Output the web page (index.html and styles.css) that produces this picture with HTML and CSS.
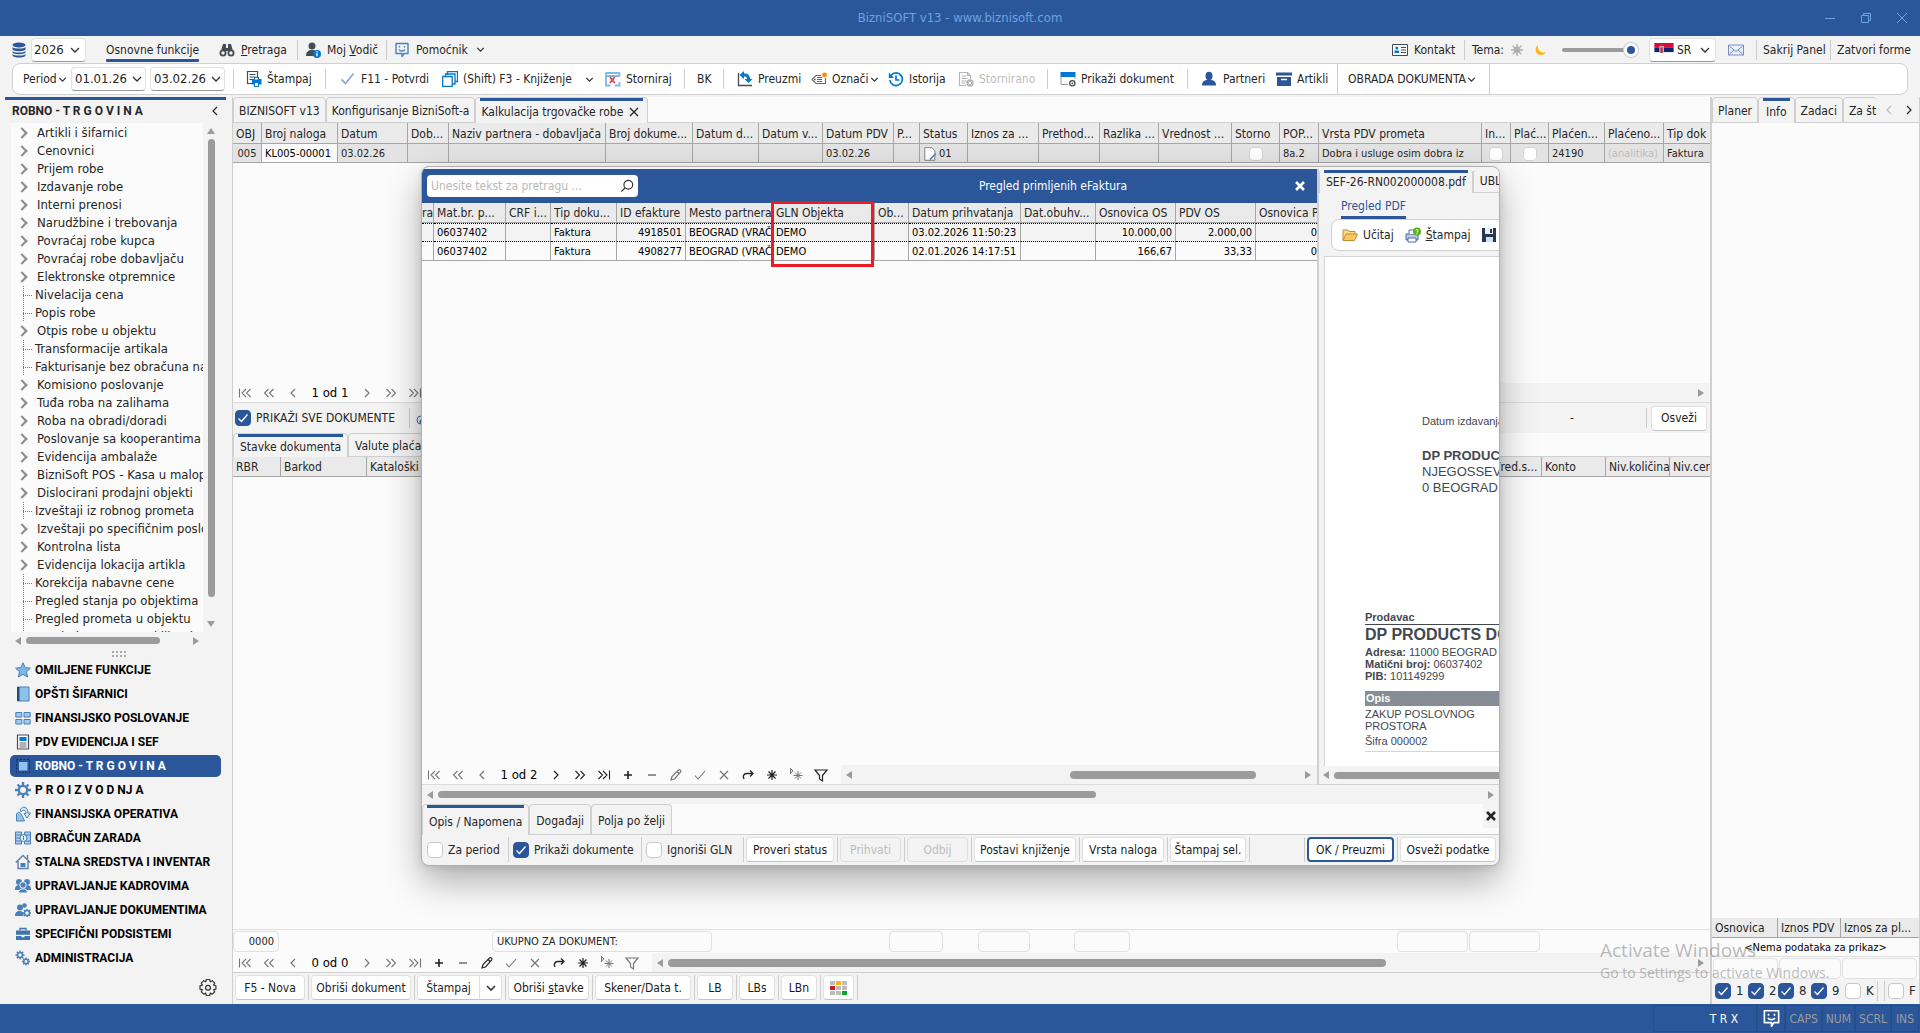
FILE: index.html
```html
<!DOCTYPE html>
<html lang="sr">
<head>
<meta charset="utf-8">
<title>BizniSOFT v13</title>
<link rel="stylesheet" href="styles.css">
</head>
<body>
<svg class="defs" aria-hidden="true">
  <symbol id="i-db" viewBox="0 0 16 16"><g fill="#2b579a"><ellipse cx="8" cy="3" rx="6.500" ry="2.500"/><path d="M1.500 5c1 2 12 2 13 0v2.500c-1 2.300-12 2.300-13 0zM1.500 9c1 2 12 2 13 0v1.500c-1 2.300-12 2.300-13 0zM1.500 12c1 2 12 2 13 0v1.500c-1 2.700-12 2.700-13 0z"/></g></symbol>
  <symbol id="i-chev" viewBox="0 0 16 16"><path d="M4 6l4 4 4-4" fill="none" stroke="#333" stroke-width="1.600"/></symbol>
  <symbol id="i-binoc" viewBox="0 0 16 16"><g fill="#444c54"><path d="M4 2h3v4h2V2h3l2 7H2z"/><circle cx="4" cy="11" r="3.500"/><circle cx="12" cy="11" r="3.500"/></g><circle cx="4" cy="11" r="1.700" fill="#f3f3f3"/><circle cx="12" cy="11" r="1.700" fill="#f3f3f3"/></symbol>
  <symbol id="i-userinfo" viewBox="0 0 16 16"><circle cx="7" cy="4" r="3.500" fill="#444c54"/><path d="M1 14c0-4 2-5 4-6h4c2 1 3 2 3 6z" fill="#444c54"/><circle cx="12" cy="12" r="4" fill="#0078d4"/><path d="M12 9.200v1.300M12 11.300v3" stroke="#fff" stroke-width="1.400"/></symbol>
  <symbol id="i-smile" viewBox="0 0 16 16"><path d="M2 1.500h12v10h-4l-2 3v-3H2z" fill="none" stroke="currentColor" stroke-width="1.400" stroke-linejoin="round"/><path d="M5.500 4v1.600M10.500 4v1.600M5 7.500c1 2 5 2 6 0" fill="none" stroke="currentColor" stroke-width="1.400"/></symbol>
  <symbol id="i-card" viewBox="0 0 16 16"><path d="M.5 2.500h15v11H.5z" fill="#fff" stroke="#444c54"/><circle cx="4.800" cy="6" r="1.500" fill="#0078d4"/><path d="M2.500 11V8.500h4.500V11z" fill="#0078d4"/><path d="M9 5.500h5M9 8h5M9 10.500h5" stroke="#444c54"/></symbol>
  <symbol id="i-sun" viewBox="0 0 16 16"><circle cx="8" cy="8" r="3.300" fill="#b0b0b0"/><path d="M8 2v3M8 11v3M2 8h3M11 8h3M3.700 3.700l2 2M10.300 10.300l2 2M12.300 3.700l-2 2M5.700 10.300l-2 2" stroke="#b0b0b0" stroke-width="1.500"/></symbol>
  <symbol id="i-moon" viewBox="0 0 16 16"><path d="M5 3a5.500 5.500 0 1 0 8 7c-5 2-9-2-8-7z" fill="#fdb913"/></symbol>
  <symbol id="i-flag" viewBox="0 0 22 16"><path fill="#dc0a3c" d="M0 0h22v5.400H0z"/><path fill="#0c2577" d="M0 5.300h22v5.400H0z"/><path fill="#fff" d="M0 10.600h22V16H0z"/><path fill="#d9a0a8" d="M5.500 3h5.500v7c0 2-5.500 2-5.500 0z"/><path fill="#c0283c" d="M7 5h2.500v6H7zM6 1h4.500v2H6z"/></symbol>
  <symbol id="i-mail" viewBox="0 0 16 16"><path d="M.5 3h15v10H.5z" fill="#eaf0fa" stroke="#7b8fc4"/><path d="M.5 3.500L8 9.500l7.500-6M.5 13l5.500-5M15.500 13L10 8" fill="none" stroke="#7b8fc4"/></symbol>
  <symbol id="i-print" viewBox="0 0 16 16"><path d="M7 12.500H1.500v-12h10V6M3.500 3.500h6M3.500 6h6M3.500 8.500H6" fill="none" stroke="#444c54" stroke-width="1.200"/><path d="M8 8V6h5v2h2.500v5.500H13V16H8v-2.500H6V8z" fill="#0078d4"/><path d="M9 7h3v1.500H9zM9 12h3v3H9z" fill="#fff"/></symbol>
  <symbol id="i-check" viewBox="0 0 16 16"><path d="M1.500 8.500l4 4 8-10" fill="none" stroke="#8fa8d4" stroke-width="1.800"/></symbol>
  <symbol id="i-copy" viewBox="0 0 16 16"><path d="M5.500 4V.5h10v10H13M3.500 6V3h9.500v10h-2.500M.7 5.500h9.500v10H.7z" fill="none" stroke="#0078d4" stroke-width="1.300"/></symbol>
  <symbol id="i-cancel" viewBox="0 0 16 16"><path d="M1 1.500v13h4.500M14.500 5V1.500M1 2h13.500M14.500 11v3.500H10M1 5h13.500" fill="none" stroke="#7db8ea" stroke-width="1.800"/><path d="M4.800 6l5 6M9.800 6l-5 6" stroke="#e23b4a" stroke-width="1.800"/></symbol>
  <symbol id="i-load" viewBox="0 0 16 16"><path d="M1.500 2v12.500H15" fill="none" stroke="#444c54" stroke-width="1.300"/><path d="M2.500 4L7 0v2.500c4 0 6 2 6 5.500h2.500L11.500 12 7.500 8H10c0-2-1-2.500-3-2.500V8z" fill="#0078d4"/></symbol>
  <symbol id="i-tag" viewBox="0 0 16 16"><path d="M14.500 7v5.500H5L1 8.500l4-4h5M6 6.500h5M6 8.500h5M6 10.500h5" fill="none" stroke="#666" stroke-width="1.100"/><circle cx="3.800" cy="8.500" r=".9" fill="#666"/><circle cx="13.500" cy="4" r="2.400" fill="#ff8c00"/></symbol>
  <symbol id="i-history" viewBox="0 0 16 16"><path d="M3 4.500A6.300 6.300 0 1 1 1.800 9M8 4.500V9h3.500" fill="none" stroke="#0078d4" stroke-width="1.700"/><path d="M.8 1.500V7H6z" fill="#0078d4"/></symbol>
  <symbol id="i-docx" viewBox="0 0 16 16"><path d="M8 14.500H1.500v-13h8l3 3V8M3.500 5h5M3.500 7.500h6M3.500 10h5M3.500 12h4M9.500 1.500v3h3" fill="none" stroke="#b5b5b5" stroke-width="1.100"/><circle cx="12" cy="12" r="3.700" fill="#b5b5b5"/><path d="M10.500 10.500l3 3M13.500 10.500l-3 3" stroke="#fff"/></symbol>
  <symbol id="i-window" viewBox="0 0 16 16"><path d="M.5 1h15v5H.5z" fill="#0078d4"/><path d="M1 6v7.500h7M15 6v2" fill="none" stroke="#999"/><circle cx="12.300" cy="12.300" r="2.600" fill="none" stroke="#444c54" stroke-width="1.300"/><circle cx="12.300" cy="12.300" r=".9" fill="#444c54"/></symbol>
  <symbol id="i-user" viewBox="0 0 16 16"><ellipse cx="7" cy="5" rx="3.500" ry="4.300" fill="#2b579a"/><path d="M0 14.500c0-4 2-5 4.500-5.500h5c2.500.5 4.500 1.500 4.500 5.500z" fill="#2b579a"/></symbol>
  <symbol id="i-box" viewBox="0 0 16 16"><path d="M0 1.500h16v3H0zM1 6h14v9H1z" fill="#2b579a"/><path d="M5 8.500h6" stroke="#fff" stroke-width="1.500"/></symbol>
  <symbol id="i-x" viewBox="0 0 16 16"><path d="M4 4l8 8M12 4l-8 8" stroke="currentColor" stroke-width="1.300"/></symbol>
  <symbol id="i-xbold" viewBox="0 0 16 16"><path d="M4 4l8 8M12 4l-8 8" stroke="currentColor" stroke-width="2.600"/></symbol>
  <symbol id="i-left" viewBox="0 0 16 16"><path d="M10 4L6 8l4 4" fill="none" stroke="currentColor" stroke-width="1.200"/></symbol>
  <symbol id="i-right" viewBox="0 0 16 16"><path d="M6 4l4 4-4 4" fill="none" stroke="currentColor" stroke-width="1.200"/></symbol>
  <symbol id="i-left2" viewBox="0 0 16 16"><path d="M7.500 4l-4 4 4 4M12.500 4l-4 4 4 4" fill="none" stroke="currentColor" stroke-width="1.100"/></symbol>
  <symbol id="i-right2" viewBox="0 0 16 16"><path d="M8.500 4l4 4-4 4M3.500 4l4 4-4 4" fill="none" stroke="currentColor" stroke-width="1.100"/></symbol>
  <symbol id="i-first" viewBox="0 0 16 16"><path d="M2.500 3.500v9M9 4L5 8l4 4M13.500 4l-4 4 4 4" fill="none" stroke="currentColor" stroke-width="1.100"/></symbol>
  <symbol id="i-last" viewBox="0 0 16 16"><path d="M13.500 3.500v9M7 4l4 4-4 4M2.500 4l4 4-4 4" fill="none" stroke="currentColor" stroke-width="1.100"/></symbol>
  <symbol id="i-plus" viewBox="0 0 16 16"><path d="M4 8h8M8 4v8" stroke="currentColor" stroke-width="1.600"/></symbol>
  <symbol id="i-minus" viewBox="0 0 16 16"><path d="M4 8h8" stroke="currentColor" stroke-width="1.600"/></symbol>
  <symbol id="i-pen" viewBox="0 0 16 16"><path d="M3 13l1-3.500L10.500 3c1.500-1 3 .5 2.200 2L6.500 12zM9 4.500l2.500 2.500" fill="none" stroke="currentColor" stroke-width="1.200"/></symbol>
  <symbol id="i-tick" viewBox="0 0 16 16"><path d="M3 8.500l3 3.500 7-8" fill="none" stroke="currentColor" stroke-width="1.100"/></symbol>
  <symbol id="i-redo" viewBox="0 0 16 16"><path d="M4 12C2 8 5 6.500 7 6.500h5.500M10 3.500l3 3-3 3" fill="none" stroke="currentColor" stroke-width="1.300"/></symbol>
  <symbol id="i-star" viewBox="0 0 16 16"><path d="M8 3v10M3 8h10M4.500 4.500l7 7M11.500 4.500l-7 7" stroke="currentColor" stroke-width="1.200"/></symbol>
  <symbol id="i-starp" viewBox="0 0 16 16"><path d="M10 4v9M5.500 8.500h9M7 5.500l6 6M13 5.500l-6 6M2.500 1v6M2.500 1.500L5 4 2.500 6" fill="none" stroke="currentColor"/></symbol>
  <symbol id="i-filter" viewBox="0 0 16 16"><path d="M2 3h12L9.500 8.500V14L6.500 12V8.500z" fill="none" stroke="currentColor" stroke-width="1.200"/></symbol>
  <symbol id="i-search" viewBox="0 0 16 16"><circle cx="9.500" cy="6.500" r="5" fill="none" stroke="#333" stroke-width="1.300"/><path d="M6 10l-4.500 4.500" stroke="#333" stroke-width="1.300"/></symbol>
  <symbol id="i-folder" viewBox="0 0 16 16"><path d="M1 13V3h5l1 1.500h6V7" fill="#f7dc94" stroke="#c88a2e"/><path d="M1 13.500L4 7h11.500l-3 6.500z" fill="#fbc766" stroke="#c88a2e"/></symbol>
  <symbol id="i-printq" viewBox="0 0 16 16"><path d="M1 7h12v6H1z" fill="#b9c9e6" stroke="#4d6c9f"/><path d="M4 7V3h6v4M3 11h8v4H3z" fill="#fff" stroke="#4d6c9f"/><circle cx="12" cy="4.500" r="4" fill="#5fae1c"/><path d="M10.800 3.500c.5-1.500 3-1 2.200.5L12 5v.6M12 6.300v1" fill="none" stroke="#fff"/></symbol>
  <symbol id="i-disk" viewBox="0 0 16 16"><path d="M1 1h14v14H1z" fill="#26384f"/><path d="M4 1h8v6H4z" fill="#e8f0f8"/><path d="M5 10h7v5H5z" fill="#cfe0f2"/><path d="M9 2h2v4H9z" fill="#26384f"/></symbol>
  <symbol id="i-doc" viewBox="0 0 16 16"><path d="M2 .7h8l3.500 3.500v11H2z" fill="#fff" stroke="#777"/><path d="M15.500 8l-6 6-2 1.500.5-2.500 6-6z" fill="#4a80bd"/></symbol>
  <symbol id="i-clip" viewBox="0 0 16 16"><path d="M13 3L6 10a2 2 0 0 0 3 3l5-5" fill="none" stroke="#3f6db3" stroke-width="1.500"/><circle cx="6" cy="10" r="4" fill="none" stroke="#3f6db3"/></symbol>
  <symbol id="i-colors" viewBox="0 0 18 16"><path fill="#bdbdbd" d="M0 1h5v4H0zM12 1h5v4h-5zM6 6h5v4H6zM12 6h5v4h-5zM0 11h5v4H0zM6 11h5v4H6z"/><path fill="#f8b617" d="M6 1h5v4H6z"/><path fill="#cf1c1c" d="M0 6h5v4H0z"/><path fill="#10a52a" d="M12 11h5v4h-5z"/></symbol>
  <symbol id="i-gear" viewBox="0 0 20 20"><path d="M8.300 1.500h3.400l.6 2.300 2-1.100 2.400 2.400-1.100 2 2.300.7v3.400l-2.300.6 1.100 2-2.400 2.400-2-1.100-.6 2.400H8.300l-.6-2.400-2 1.100-2.400-2.400 1.100-2-2.400-.6V7.800l2.400-.7-1.100-2 2.400-2.400 2 1.100z" fill="none" stroke="#333" stroke-width="1.200" stroke-linejoin="round"/><circle cx="10" cy="9.700" r="2.400" fill="none" stroke="#333" stroke-width="1.200"/></symbol>
  <symbol id="n-star" viewBox="0 0 16 16"><path d="M8 .8l2.200 4.800 5.200.6-3.900 3.500 1.100 5.300L8 12.300 3.400 15l1.100-5.300L.6 6.200l5.200-.6z" fill="#7db7e4" stroke="#4a7fb8"/></symbol>
  <symbol id="n-book" viewBox="0 0 16 16"><path d="M2.500 1h11.500v14H2.500z" fill="#8cc3ec" stroke="#4a7fb8"/><path d="M2 1h2.500v14H2z" fill="#2c4a70"/></symbol>
  <symbol id="n-cells" viewBox="0 0 16 16"><path d="M.8 2.500h6v4.500h-6zM9 2.500h6.200v4.500H9zM.8 9.500h6V14h-6zM9 9.500h6.200V14H9z" fill="#9ccaf0" stroke="#4a7fb8"/></symbol>
  <symbol id="n-calc" viewBox="0 0 16 16"><path d="M2.500 1h11v14h-11z" fill="#fff" stroke="#444c54" stroke-width="1.200"/><path d="M4.500 3h7v4h-7z" fill="#0078d4"/><path d="M4.500 9h7M4.500 11h7M4.500 13h7" stroke="#666"/></symbol>
  <symbol id="n-square" viewBox="0 0 16 16"><path d="M1.500 1.500h13v13h-13z" fill="none" stroke="#16325e" stroke-dasharray="2 1.500"/><path d="M4 4h8.500v8.500H4z" fill="#8fc1f3"/></symbol>
  <symbol id="n-gear" viewBox="0 0 16 16"><path d="M8 0v16M0 8h16M2.500 2.500l11 11M13.500 2.500l-11 11" stroke="#4a80bd" stroke-width="2.400"/><circle cx="8" cy="8" r="5.300" fill="#4a80bd"/><circle cx="8" cy="8" r="3" fill="#f3f3f3"/></symbol>
  <symbol id="n-oper" viewBox="0 0 16 16"><path d="M1.500 15V8c3-4 5 0 8 7z" fill="#8cc3ec" stroke="#4a7fb8"/><path d="M5 4c3-5 8-3 8 3h2.500L12 12 9 7.500h2C11 4 8 3 6 6z" fill="#cfe5f7" stroke="#4a7fb8"/></symbol>
  <symbol id="n-pay" viewBox="0 0 16 16"><path d="M.5 2h6v12h-6zM9.500 2h6v12h-6z" fill="#a9cdea" stroke="#4a7fb8"/><path d="M.5 5h6M.5 8h6M.5 11h6M9.500 5h6M9.500 11h6" stroke="#4a7fb8"/><circle cx="8.500" cy="8" r="3.500" fill="#e6f1fa" stroke="#4a7fb8"/><path d="M8.500 6v4" stroke="#4a7fb8"/></symbol>
  <symbol id="n-home" viewBox="0 0 16 16"><path d="M.8 8.500L8 1.500l7.200 7M3 7v7.500h10V7M12.500 1v5" fill="none" stroke="#5d7fa8" stroke-width="1.400"/><path d="M5.500 9h5v4h-5z" fill="#4a80bd"/></symbol>
  <symbol id="n-people" viewBox="0 0 16 16"><g fill="#4a80bd"><circle cx="4" cy="4" r="3"/><circle cx="12" cy="4" r="3"/><path d="M0 11c0-3 2-4 4-4h8c2 0 4 1 4 4v1H0z"/></g><circle cx="8" cy="7" r="3.200" fill="#4a80bd" stroke="#f3f3f3"/><path d="M3.500 15c0-3 2-4.200 4.500-4.200s4.500 1.200 4.500 4.200z" fill="#4a80bd" stroke="#f3f3f3"/></symbol>
  <symbol id="n-peoplegear" viewBox="0 0 16 16"><g fill="#4a80bd"><circle cx="5" cy="5.500" r="3"/><circle cx="9.500" cy="3.500" r="2.300"/><path d="M0 14c0-4 2-5 5-5 2 0 3 1 3.500 2v3z"/></g><path d="M12 7v8M8 11h8M9 8l6 6M15 8l-6 6" stroke="#4a80bd" stroke-width="1.400"/><circle cx="12" cy="11" r="2.500" fill="#f3f3f3" stroke="#4a80bd" stroke-width="1.300"/></symbol>
  <symbol id="n-case" viewBox="0 0 16 16"><path d="M5 4.500V2.500h6v2" fill="none" stroke="#3f74ad" stroke-width="1.300"/><path d="M1 4.500h14v4.300H1zM1 10h5.500v1.200h3V10H15v4H1z" fill="#3f74ad"/></symbol>
  <symbol id="n-gears" viewBox="0 0 16 16"><g stroke="#4a80bd" stroke-width="1.500"><path d="M5 .5v9M.5 5h9M1.800 1.800l6.400 6.400M8.200 1.800L1.800 8.200M11 7.500v8M7 11.500h8M8.200 8.700l5.600 5.600M13.800 8.700l-5.600 5.600"/></g><circle cx="5" cy="5" r="2.500" fill="#f3f3f3" stroke="#4a80bd" stroke-width="1.500"/><circle cx="11" cy="11.500" r="2.200" fill="#f3f3f3" stroke="#4a80bd" stroke-width="1.500"/></symbol>
</svg>

<div class="app">
  <header class="titlebar">
    <h1 class="app-title">BizniSOFT v13 - www.biznisoft.com</h1>
    <div class="win-buttons">
      <button type="button" aria-label="Minimize"><svg viewBox="0 0 12 12"><path d="M1 6.500h10" stroke="currentColor"/></svg></button>
      <button type="button" aria-label="Restore"><svg viewBox="0 0 12 12"><path d="M1.500 3.500h7v7h-7zM3.500 3.500v-2h7v7h-2" fill="none" stroke="currentColor"/></svg></button>
      <button type="button" aria-label="Close"><svg viewBox="0 0 12 12"><path d="M1 1l10 10M11 1L1 11" stroke="currentColor"/></svg></button>
    </div>
  </header>

  <nav class="menubar">
    <svg class="ic"><use href="#i-db"/></svg>
    <select class="combo year" aria-label="Godina"><option>2026</option></select>
    <a class="menu-item active" href="#">Osnovne funkcije</a>
    <a class="menu-item" href="#"><svg class="ic"><use href="#i-binoc"/></svg><span><u>P</u>retraga</span></a>
    <span class="sep"></span>
    <a class="menu-item" href="#"><svg class="ic"><use href="#i-userinfo"/></svg><span>Moj <u>V</u>odič</span></a>
    <span class="sep"></span>
    <a class="menu-item" href="#"><svg class="ic blue"><use href="#i-smile"/></svg><span>Pomoćnik</span><svg class="mini"><use href="#i-chev"/></svg></a>
    <span></span>
    <a class="menu-item" href="#"><svg class="ic"><use href="#i-card"/></svg><span>Kontakt</span></a>
    <span class="sep"></span>
    <label for="theme">Tema:</label>
    <svg class="ic sun"><use href="#i-sun"/></svg>
    <svg class="ic"><use href="#i-moon"/></svg>
    <input class="slider" id="theme" type="range" min="0" max="10" value="10">
    <span class="lang"><svg class="flag"><use href="#i-flag"/></svg><select class="combo" aria-label="Jezik"><option>SR</option></select></span>
    <svg class="ic"><use href="#i-mail"/></svg>
    <span class="sep"></span>
    <a class="menu-item" href="#">Sakrij Panel</a>
    <span class="sep"></span>
    <a class="menu-item" href="#">Zatvori forme</a>
  </nav>

  <div class="toolbar">
    <button type="button" class="tool first">Period<svg class="mini"><use href="#i-chev"/></svg></button>
    <select class="combo date" aria-label="Od datuma"><option>01.01.26</option></select>
    <select class="combo date" aria-label="Do datuma"><option>03.02.26</option></select>
    <span class="sep"></span>
    <button type="button" class="tool"><svg class="ic"><use href="#i-print"/></svg>Štampaj</button>
    <span class="sep"></span>
    <button type="button" class="tool"><svg class="ic"><use href="#i-check"/></svg>F11 - Potvrdi</button>
    <button type="button" class="tool"><svg class="ic"><use href="#i-copy"/></svg>(Shift) F3 - Knjiženje<svg class="mini spaced"><use href="#i-chev"/></svg></button>
    <button type="button" class="tool"><svg class="ic"><use href="#i-cancel"/></svg>Storniraj</button>
    <span class="sep"></span>
    <button type="button" class="tool">BK</button>
    <span class="sep"></span>
    <button type="button" class="tool"><svg class="ic"><use href="#i-load"/></svg>Preuzmi</button>
    <button type="button" class="tool"><svg class="ic"><use href="#i-tag"/></svg>Označi<svg class="mini"><use href="#i-chev"/></svg></button>
    <button type="button" class="tool"><svg class="ic"><use href="#i-history"/></svg>Istorija</button>
    <button type="button" class="tool" disabled><svg class="ic"><use href="#i-docx"/></svg>Stornirano</button>
    <span class="sep"></span>
    <button type="button" class="tool"><svg class="ic"><use href="#i-window"/></svg>Prikaži dokument</button>
    <span class="sep"></span>
    <button type="button" class="tool"><svg class="ic"><use href="#i-user"/></svg>Partneri</button>
    <button type="button" class="tool"><svg class="ic"><use href="#i-box"/></svg>Artikli</button>
    <span class="sep tall"></span>
    <button type="button" class="tool">OBRADA DOKUMENTA<svg class="mini"><use href="#i-chev"/></svg></button>
    <span class="sep tall"></span>
  </div>

  <main class="workspace">
    <aside class="side">
      <div class="side-head"><h2>ROBNO - T R G O V I N A</h2><svg class="ic"><use href="#i-left"/></svg></div>
      <div class="tree-wrap">
        <ul class="tree">
          <li>Artikli i šifarnici</li><li>Cenovnici</li><li>Prijem robe</li><li>Izdavanje robe</li><li>Interni prenosi</li>
          <li>Narudžbine i trebovanja</li><li>Povraćaj robe kupca</li><li>Povraćaj robe dobavljaču</li><li>Elektronske otpremnice</li>
          <li class="leaf">Nivelacija cena</li><li class="leaf">Popis robe</li><li>Otpis robe u objektu</li>
          <li class="leaf">Transformacije artikala</li><li class="leaf">Fakturisanje bez obračuna nabavke</li>
          <li>Komisiono poslovanje</li><li>Tuđa roba na zalihama</li><li>Roba na obradi/doradi</li><li>Poslovanje sa kooperantima</li>
          <li>Evidencija ambalaže</li><li>BizniSoft POS - Kasa u maloprodaji</li><li>Dislocirani prodajni objekti</li>
          <li class="leaf">Izveštaji iz robnog prometa</li><li>Izveštaji po specifičnim poslovima</li><li>Kontrolna lista</li>
          <li>Evidencija lokacija artikla</li><li class="leaf">Korekcija nabavne cene</li><li class="leaf">Pregled stanja po objektima</li>
          <li class="leaf">Pregled prometa u objektu</li><li class="leaf">Pregled prometa po klijentima</li>
        </ul>
        <div class="vscroll"><span class="tri up"></span><span class="track"><span class="thumb"></span></span><span class="tri down"></span></div>
      </div>
      <div class="hscroll tree-h"><span class="tri left"></span><span class="track"><span class="thumb"></span></span><span class="tri right"></span></div>
      <div class="grip"></div>
      <nav class="modules">
        <a href="#"><svg class="ic"><use href="#n-star"/></svg>OMILJENE FUNKCIJE</a>
        <a href="#"><svg class="ic"><use href="#n-book"/></svg>OPŠTI ŠIFARNICI</a>
        <a href="#"><svg class="ic"><use href="#n-cells"/></svg>FINANSIJSKO POSLOVANJE</a>
        <a href="#"><svg class="ic"><use href="#n-calc"/></svg>PDV EVIDENCIJA I SEF</a>
        <a href="#" class="selected"><svg class="ic"><use href="#n-square"/></svg>ROBNO - T R G O V I N A</a>
        <a href="#"><svg class="ic"><use href="#n-gear"/></svg>P R O I Z V O D NJ A</a>
        <a href="#"><svg class="ic"><use href="#n-oper"/></svg>FINANSIJSKA OPERATIVA</a>
        <a href="#"><svg class="ic"><use href="#n-pay"/></svg>OBRAČUN ZARADA</a>
        <a href="#"><svg class="ic"><use href="#n-home"/></svg>STALNA SREDSTVA I INVENTAR</a>
        <a href="#"><svg class="ic"><use href="#n-people"/></svg>UPRAVLJANJE KADROVIMA</a>
        <a href="#"><svg class="ic"><use href="#n-peoplegear"/></svg>UPRAVLJANJE DOKUMENTIMA</a>
        <a href="#"><svg class="ic"><use href="#n-case"/></svg>SPECIFIČNI PODSISTEMI</a>
        <a href="#"><svg class="ic"><use href="#n-gears"/></svg>ADMINISTRACIJA</a>
      </nav>
      <div class="side-foot"><button type="button" aria-label="Podešavanja"><svg class="gear"><use href="#i-gear"/></svg></button></div>
    </aside>

    <section class="center">
      <div class="tabs">
        <button type="button" class="tab">BIZNISOFT v13</button>
        <button type="button" class="tab">Konfigurisanje BizniSoft-a</button>
        <button type="button" class="tab active">Kalkulacija trgovačke robe<svg class="ic"><use href="#i-x"/></svg></button>
      </div>
      <div class="upper">
        <table class="grid docs">
          <colgroup><col class="w29"><col class="w76"><col class="w70"><col class="w41"><col class="w157"><col class="w87"><col class="w66"><col class="w64"><col class="w71"><col class="w26"><col class="w48"><col class="w71"><col class="w61"><col class="w59"><col class="w73"><col class="w48"><col class="w39"><col class="w163"><col class="w29"><col class="w38"><col class="w56"><col class="w59"><col></colgroup>
          <thead><tr><th>OBJ</th><th>Broj naloga</th><th>Datum</th><th>Dob...</th><th>Naziv partnera - dobavljača</th><th>Broj dokume...</th><th>Datum d...</th><th>Datum v...</th><th>Datum PDV</th><th>P...</th><th>Status</th><th>Iznos za ...</th><th>Prethod...</th><th>Razlika ...</th><th>Vrednost ...</th><th>Storno</th><th>POP...</th><th>Vrsta PDV prometa</th><th>In...</th><th>Plać...</th><th>Plaćen...</th><th>Plaćeno...</th><th>Tip dok</th></tr></thead>
          <tbody><tr><td class="mid">005</td><td class="lit">KL005-00001</td><td>03.02.26</td><td></td><td></td><td></td><td></td><td></td><td>03.02.26</td><td></td><td><span class="status"><svg class="ic"><use href="#i-doc"/></svg>01</span></td><td></td><td></td><td></td><td></td><td class="mid"><input type="checkbox" aria-label="Storno"></td><td>8a.2</td><td>Dobra i usluge osim dobra iz</td><td class="mid"><input type="checkbox" aria-label="In"></td><td class="mid"><input type="checkbox" aria-label="Plaćeno"></td><td>24190</td><td class="dim">(analitika)</td><td>Faktura</td></tr></tbody>
        </table>
      </div>
      <div class="navigator ruled">
        <button type="button" aria-label="Prvi"><svg class="ic"><use href="#i-first"/></svg></button><button type="button" aria-label="Nazad više"><svg class="ic"><use href="#i-left2"/></svg></button><button type="button" aria-label="Nazad"><svg class="ic"><use href="#i-left"/></svg></button>
        <span class="pos">1 od 1</span>
        <button type="button" aria-label="Napred"><svg class="ic"><use href="#i-right"/></svg></button><button type="button" aria-label="Napred više"><svg class="ic"><use href="#i-right2"/></svg></button><button type="button" aria-label="Poslednji"><svg class="ic"><use href="#i-last"/></svg></button>
        <div class="hscroll doc-h"><span class="track"></span><span class="tri right"></span></div>
      </div>
      <div class="showall">
        <label class="check"><input type="checkbox" checked>PRIKAŽI SVE DOKUMENTE</label>
        <span class="sep"></span>
        <svg class="ic"><use href="#i-clip"/></svg>
        <span class="dash">-</span>
        <span class="sep"></span>
        <button type="button" class="btn">Osveži</button>
      </div>
      <div class="tabs small">
        <button type="button" class="tab active">Stavke dokumenta</button>
        <button type="button" class="tab">Valute plaćanja</button>
      </div>
      <div class="lower">
        <table class="grid">
          <colgroup><col class="w48"><col class="w86"><col class="w120"><col><col class="w52"><col class="w64"><col class="w64"><col class="w40"></colgroup>
          <thead><tr><th>RBR</th><th>Barkod</th><th>Kataloški broj</th><th></th><th>Vred.s...</th><th>Konto</th><th>Niv.količina</th><th>Niv.cena</th></tr></thead>
        </table>
      </div>
      <div class="sums">
        <output class="cell num">0000</output><span></span><output class="cell">UKUPNO ZA DOKUMENT:</output><span></span><output class="cell"></output><span></span><output class="cell"></output><span></span><output class="cell"></output><span></span><output class="cell"></output><output class="cell"></output><span></span>
      </div>
      <div class="navigator">
        <button type="button" aria-label="Prvi"><svg class="ic"><use href="#i-first"/></svg></button><button type="button" aria-label="Nazad više"><svg class="ic"><use href="#i-left2"/></svg></button><button type="button" aria-label="Nazad"><svg class="ic"><use href="#i-left"/></svg></button>
        <span class="pos">0 od 0</span>
        <button type="button" aria-label="Napred"><svg class="ic"><use href="#i-right"/></svg></button><button type="button" aria-label="Napred više"><svg class="ic"><use href="#i-right2"/></svg></button><button type="button" aria-label="Poslednji"><svg class="ic"><use href="#i-last"/></svg></button>
        <button type="button" aria-label="Dodaj" class="dark"><svg class="ic"><use href="#i-plus"/></svg></button><button type="button" aria-label="Obriši"><svg class="ic"><use href="#i-minus"/></svg></button><button type="button" aria-label="Izmeni" class="dark"><svg class="ic"><use href="#i-pen"/></svg></button><button type="button" aria-label="Potvrdi"><svg class="ic"><use href="#i-tick"/></svg></button><button type="button" aria-label="Odustani"><svg class="ic"><use href="#i-x"/></svg></button><button type="button" aria-label="Osveži" class="dark"><svg class="ic"><use href="#i-redo"/></svg></button><button type="button" aria-label="Obeleži" class="dark"><svg class="ic"><use href="#i-star"/></svg></button><button type="button" aria-label="Idi na obeleženo"><svg class="ic"><use href="#i-starp"/></svg></button><button type="button" aria-label="Filter" class="wide"><svg class="ic"><use href="#i-filter"/></svg></button>
        <div class="hscroll item-h"><span class="tri left"></span><span class="track"><span class="thumb"></span></span><span class="tri right"></span></div>
      </div>
      <div class="actions">
        <button type="button" class="btn">F5 - Nova</button><span class="sep"></span>
        <button type="button" class="btn">Obriši dokument</button><span class="sep"></span>
        <div class="split"><button type="button">Štampaj</button><button type="button" aria-label="Više opcija štampe"><svg class="ic"><use href="#i-chev"/></svg></button></div><span class="sep"></span>
        <button type="button" class="btn"><span>Obriši <u>s</u>tavke</span></button><span class="sep"></span>
        <button type="button" class="btn">Skener/Data t.</button><span class="sep"></span>
        <button type="button" class="btn">LB</button><span class="sep"></span>
        <button type="button" class="btn">LBs</button><span class="sep"></span>
        <button type="button" class="btn">LBn</button><span class="sep"></span>
        <button type="button" class="btn" aria-label="Boje"><svg class="colors"><use href="#i-colors"/></svg></button><span class="sep"></span>
      </div>
    </section>

    <aside class="info">
      <div class="tabs">
        <button type="button" class="tab">Planer</button>
        <button type="button" class="tab active">Info</button>
        <button type="button" class="tab">Zadaci</button>
        <button type="button" class="tab cut">Za štampu</button>
        <span class="pager"><svg class="ic faint"><use href="#i-left"/></svg><svg class="ic"><use href="#i-right"/></svg></span>
      </div>
      <div class="info-body"></div>
      <table class="grid">
        <colgroup><col class="w66"><col class="w63"><col></colgroup>
        <thead><tr><th>Osnovica</th><th>Iznos PDV</th><th>Iznos za pl...</th></tr></thead>
        <tbody><tr><td colspan="3" class="empty">&lt;Nema podataka za prikaz&gt;</td></tr></tbody>
      </table>
      <div class="info-sums"><output class="cell"></output><output class="cell"></output><output class="cell"></output></div>
      <div class="flags">
        <label class="check"><input type="checkbox" checked>1</label>
        <label class="check"><input type="checkbox" checked>2</label>
        <label class="check"><input type="checkbox" checked>8</label>
        <label class="check"><input type="checkbox" checked>9</label>
        <label class="check"><input type="checkbox">K</label>
        <span class="sep"></span><span class="sep"></span>
        <label class="check"><input type="checkbox">F</label>
      </div>
    </aside>
  </main>

  <footer class="statusbar">
    <span class="cellbar trx">T R X</span><span class="cellbar white"><svg class="face"><use href="#i-smile"/></svg></span><span class="cellbar">CAPS</span><span class="cellbar">NUM</span><span class="cellbar">SCRL</span><span class="cellbar">INS</span>
  </footer>

  <section class="dialog" role="dialog" aria-label="Pregled primljenih eFaktura">
    <div class="dialog-body">
      <div class="invoices">
        <div class="dialog-head">
          <label class="search"><input type="text" placeholder="Unesite tekst za pretragu ..." aria-label="Pretraga"><svg class="ic"><use href="#i-search"/></svg></label>
          <h2>Pregled primljenih eFaktura</h2>
          <button type="button" aria-label="Zatvori"><svg class="ic"><use href="#i-xbold"/></svg></button>
        </div>
        <div class="invoice-list">
          <table class="grid black">
            <colgroup><col class="w12"><col class="w72"><col class="w45"><col class="w66"><col class="w69"><col class="w87"><col class="w102"><col class="w34"><col class="w112"><col class="w75"><col class="w80"><col class="w80"><col></colgroup>
            <thead><tr><th class="flush">ra</th><th>Mat.br. p...</th><th>CRF i...</th><th>Tip doku...</th><th>ID efakture</th><th>Mesto partnera</th><th>GLN Objekta</th><th>Ob...</th><th>Datum prihvatanja</th><th>Dat.obuhv...</th><th>Osnovica OS</th><th>PDV OS</th><th>Osnovica PS</th></tr></thead>
            <tbody>
              <tr class="focus"><td></td><td>06037402</td><td></td><td>Faktura</td><td class="num">4918501</td><td>BEOGRAD (VRAČAR)</td><td>DEMO</td><td></td><td>03.02.2026 11:50:23</td><td></td><td class="num">10.000,00</td><td class="num">2.000,00</td><td class="num flush">0</td></tr>
              <tr><td></td><td>06037402</td><td></td><td>Faktura</td><td class="num">4908277</td><td>BEOGRAD (VRAČAR)</td><td>DEMO</td><td></td><td>02.01.2026 14:17:51</td><td></td><td class="num">166,67</td><td class="num">33,33</td><td class="num flush">0</td></tr>
            </tbody>
          </table>
        </div>
        <div class="navigator ruled">
          <button type="button" aria-label="Prvi"><svg class="ic"><use href="#i-first"/></svg></button><button type="button" aria-label="Nazad više"><svg class="ic"><use href="#i-left2"/></svg></button><button type="button" aria-label="Nazad"><svg class="ic"><use href="#i-left"/></svg></button>
          <span class="pos">1 od 2</span>
          <button type="button" aria-label="Napred" class="dark"><svg class="ic"><use href="#i-right"/></svg></button><button type="button" aria-label="Napred više" class="dark"><svg class="ic"><use href="#i-right2"/></svg></button><button type="button" aria-label="Poslednji" class="dark"><svg class="ic"><use href="#i-last"/></svg></button>
          <button type="button" aria-label="Dodaj" class="dark"><svg class="ic"><use href="#i-plus"/></svg></button><button type="button" aria-label="Obriši"><svg class="ic"><use href="#i-minus"/></svg></button><button type="button" aria-label="Izmeni"><svg class="ic"><use href="#i-pen"/></svg></button><button type="button" aria-label="Potvrdi"><svg class="ic"><use href="#i-tick"/></svg></button><button type="button" aria-label="Odustani"><svg class="ic"><use href="#i-x"/></svg></button><button type="button" aria-label="Osveži" class="dark"><svg class="ic"><use href="#i-redo"/></svg></button><button type="button" aria-label="Obeleži" class="dark"><svg class="ic"><use href="#i-star"/></svg></button><button type="button" aria-label="Idi na obeleženo"><svg class="ic"><use href="#i-starp"/></svg></button><button type="button" aria-label="Filter" class="wide dark"><svg class="ic"><use href="#i-filter"/></svg></button>
          <div class="hscroll inv-h"><span class="tri left"></span><span class="track"><span class="thumb"></span></span><span class="tri right"></span></div>
        </div>
      </div>
      <div class="preview">
        <div class="tabs">
          <button type="button" class="tab active">SEF-26-RN002000008.pdf</button>
          <button type="button" class="tab">UBL</button>
        </div>
        <div class="subtabs"><a href="#">Pregled PDF</a></div>
        <div class="pdfbar">
          <button type="button" class="tool"><svg class="ic"><use href="#i-folder"/></svg>Učitaj</button>
          <button type="button" class="tool"><svg class="ic"><use href="#i-printq"/></svg><span><u>Š</u>tampaj</span></button>
          <button type="button" class="tool" aria-label="Sačuvaj"><svg class="ic"><use href="#i-disk"/></svg></button>
        </div>
        <article class="page">
          <p class="issued">Datum izdavanja</p>
          <address class="buyer"><b>DP PRODUCTS</b><br>NJEGOSSEVA<br>0 BEOGRAD</address>
          <p class="seller-cap">Prodavac</p>
          <h3>DP PRODUCTS DOO</h3>
          <p class="seller"><b>Adresa:</b> 11000 BEOGRAD (<br><b>Matični broj:</b> 06037402<br><b>PIB:</b> 101149299</p>
          <p class="band">Opis</p>
          <p class="item">ZAKUP POSLOVNOG<br>PROSTORA</p>
          <p class="code">Šifra 000002</p>
        </article>
        <div class="hscroll page-h"><span class="tri left"></span><span class="track"><span class="thumb"></span></span></div>
      </div>
    </div>
    <div class="hscroll dlg-h"><span class="tri left"></span><span class="track"><span class="thumb"></span></span><span class="tri right"></span></div>
    <div class="tabs notes">
      <button type="button" class="tab active">Opis / Napomena</button>
      <button type="button" class="tab">Događaji</button>
      <button type="button" class="tab">Polja po želji</button>
      <button type="button" class="close" aria-label="Zatvori panel"><svg class="ic"><use href="#i-xbold"/></svg></button>
    </div>
    <div class="dialog-actions">
      <label class="check"><input type="checkbox">Za period</label><span class="sep"></span>
      <label class="check"><input type="checkbox" checked>Prikaži dokumente</label><span class="sep"></span>
      <label class="check"><input type="checkbox">Ignoriši GLN</label><span class="sep"></span>
      <button type="button" class="btn">Proveri status</button><span class="sep"></span>
      <button type="button" class="btn" disabled>Prihvati</button><span class="sep"></span>
      <button type="button" class="btn" disabled>Odbij</button><span class="sep"></span>
      <button type="button" class="btn">Postavi knjiženje</button><span class="sep"></span>
      <button type="button" class="btn">Vrsta naloga</button><span class="sep"></span>
      <button type="button" class="btn">Štampaj sel.</button><span class="sep"></span>
      <span></span><span class="sep"></span>
      <button type="button" class="btn primary">OK / Preuzmi</button><span class="sep"></span>
      <button type="button" class="btn">Osveži podatke</button>
    </div>
    <div class="marker"></div>
  </section>

  <div class="watermark"><p class="wm-title">Activate Windows</p><p>Go to Settings to activate Windows.</p></div>
</div>
</body>
</html>
```
FILE: styles.css
```css
:root {
  --blue: #2b579a;
  --bg: #f3f3f3;
  --panel: #fbfbfb;
  --line: #cfcfcf;
  --rule: #a6a6a6;
  --thumb: #9b9b9b;
  --text: #262626;
  --ui: "DejaVu Sans Condensed", "DejaVu Sans", sans-serif;
}

* { box-sizing: border-box; }

body {
  margin: 0;
  background: var(--bg);
  color: var(--text);
  font: 12px/16px var(--ui);
}

h1, h2, h3, p, ul { margin: 0; padding: 0; font-size: inherit; font-weight: normal; list-style: none; }
a { color: inherit; text-decoration: none; }
button, input, select { font: inherit; color: inherit; margin: 0; }
button { display: flex; align-items: center; border: 0; padding: 0; background: none; white-space: nowrap; }
svg { display: block; flex: none; overflow: visible; }

.defs { display: none; }
.ic { width: 16px; height: 16px; }
.mini { width: 13px; height: 13px; }
.blue { color: #4a80bd; }

.app { position: relative; display: flex; flex-direction: column; min-height: 100vh; overflow: hidden; }

/* Title bar */
.titlebar { display: grid; grid-template-columns: 1fr auto 1fr; align-items: center; height: 36px; background: var(--blue); color: #6ba3e0; }
.app-title { grid-column: 2; font-size: 13px; }
.win-buttons { display: flex; justify-content: flex-end; gap: 24px; padding-right: 12px; }
.win-buttons svg { width: 12px; height: 12px; }

/* Menu row */
.menubar {
  display: grid;
  grid-template-columns: 20px 75px 113px 78px 8px 81px 8px 96px 1fr 72px 8px 38px 23px 29px 87px 79px 28px 7px 67px 7px 83px;
  align-items: center;
  height: 27px;
  padding-left: 11px;
  white-space: nowrap;
}
.menu-item { display: flex; align-items: center; gap: 6px; height: 27px; }
.menu-item.active { position: relative; justify-self: start; }
.menu-item.active::after { content: ""; position: absolute; left: 0; right: 0; bottom: 1px; height: 3px; border-radius: 1px; background: var(--blue); }
.sep { justify-self: start; width: 1px; height: 20px; background: #cdcdcd; }
.sep.tall { height: 30px; }
.sun { margin-left: -1px; }

.combo {
  appearance: none;
  height: 24px;
  padding: 0 4px;
  border: 1px solid #e2e2e2;
  border-bottom-color: #9a9a9a;
  border-radius: 4px;
  background: #fff url("data:image/svg+xml,%3Csvg xmlns='http://www.w3.org/2000/svg' viewBox='0 0 10 10'%3E%3Cpath d='M1 3l4 4 4-4' fill='none' stroke='%23333' stroke-width='1.300'/%3E%3C/svg%3E") no-repeat right 5px center / 10px 10px;
}
.combo.year { width: 55px; padding: 0 2px; font-size: 13px; }
.combo.date { width: 75px; padding: 0 3px; font-size: 13px; background-position: right 3px center; }
.lang { position: relative; width: 67px; }
.lang .combo { width: 67px; padding-left: 27px; }
.flag { position: absolute; left: 4px; top: 5px; width: 22px; height: 14px; }

.slider { appearance: none; width: 76px; height: 16px; background: none; }
.slider::-webkit-slider-runnable-track { height: 4px; border-radius: 2px; background: var(--thumb); }
.slider::-webkit-slider-thumb { appearance: none; width: 14px; height: 14px; margin-top: -5px; border: 3px solid #fff; border-radius: 50%; background: var(--blue); box-shadow: 0 0 0 1px #ccc; }

/* Toolbar */
.toolbar {
  display: grid;
  grid-template-columns: 58px 79px 83px 13px 79px 15px 102px 163px 79px 13px 26px 14px 74px 77px 70px 89px 13px 127px 15px 74px 61px 11px 141px 1fr;
  align-items: center;
  height: 32px;
  margin: 0 12px 0 12px;
  border: 1px solid var(--line);
  border-radius: 8px;
  background: #fff;
}
.tool { gap: 5px; height: 24px; }
.tool:disabled { color: #bdbdbd; }
.tool .mini { margin-left: -6px; }
.tool .mini.spaced { margin-left: 6px; }
.tool.first { padding-left: 10px; }

/* Main area */
.workspace { flex: 1; display: grid; grid-template-columns: 232px minmax(0, 1fr) 210px; padding-top: 2px; }

/* Tabs */
.tabs { display: flex; align-items: stretch; height: 26px; border-bottom: 1px solid var(--line); background: var(--panel); }
.tab { position: relative; gap: 3px; padding: 2px 5px 0; border: 1px solid var(--line); border-bottom: 0; border-radius: 4px 4px 0 0; background: var(--bg); }
.tab.active::before { content: ""; position: absolute; left: 4px; right: 4px; top: 0; height: 3px; background: var(--blue); }
.tab.active { margin-bottom: -1px; }

/* Tables of records */
.grid { width: 100%; table-layout: fixed; border-collapse: separate; border-spacing: 0; }
.grid th, .grid td { height: 20px; padding: 1px 3px 0; overflow: hidden; white-space: nowrap; text-align: left; border-right: 1px solid var(--rule); border-bottom: 1px solid var(--rule); }
.grid th { background: #eaeaea; font-weight: normal; }
.grid td { height: 19px; font-size: 11px; line-height: 14px; }
.grid th:last-child, .grid td:last-child { border-right: 0; }
.grid .mid { text-align: center; }
.grid .num { text-align: right; }
.grid .flush { padding: 1px 0 0; }
.grid.black td { color: #000; }
.grid .dim { color: #bdbdbd; }
.docs th { height: 21px; }
.docs td { background: #e3e3e3; }
.docs td.lit { background: #fbfbfb; color: #000; }
.status { display: flex; align-items: center; gap: 2px; }
.status .ic { width: 14px; height: 14px; }
.grid .focus td { background: var(--bg); border-bottom: 1px dotted #000; border-top: 1px dotted #000; }
.w12 { width: 12px; } .w26 { width: 26px; } .w29 { width: 29px; } .w34 { width: 34px; } .w38 { width: 38px; } .w39 { width: 39px; }
.w40 { width: 40px; } .w41 { width: 41px; } .w45 { width: 45px; } .w48 { width: 48px; } .w52 { width: 52px; } .w56 { width: 56px; }
.w59 { width: 59px; } .w61 { width: 61px; } .w63 { width: 63px; } .w64 { width: 64px; } .w66 { width: 66px; } .w69 { width: 69px; }
.w70 { width: 70px; } .w71 { width: 71px; } .w72 { width: 72px; } .w73 { width: 73px; } .w75 { width: 75px; } .w76 { width: 76px; }
.w80 { width: 80px; } .w86 { width: 86px; } .w87 { width: 87px; } .w102 { width: 102px; } .w112 { width: 112px; } .w120 { width: 120px; }
.w157 { width: 157px; } .w163 { width: 163px; }

/* Checkboxes */
input[type="checkbox"] {
  appearance: none;
  flex: none;
  width: 16px;
  height: 16px;
  border: 1px solid #c8c8c8;
  border-radius: 4px;
  background: #fff center / 12px 12px no-repeat;
}
.grid input[type="checkbox"] { display: block; width: 14px; height: 14px; margin: 0 auto; border-color: #d4d4d4; }
input[type="checkbox"]:checked {
  border-color: var(--blue);
  background-color: var(--blue);
  background-image: url("data:image/svg+xml,%3Csvg xmlns='http://www.w3.org/2000/svg' viewBox='0 0 12 12'%3E%3Cpath d='M1.500 6.500l3 3 6-7' fill='none' stroke='%23fff' stroke-width='1.300'/%3E%3C/svg%3E");
}
.check { display: flex; align-items: center; gap: 5px; white-space: nowrap; }

/* Buttons */
.btn { justify-content: center; height: 25px; border: 1px solid #e0e0e0; border-bottom-color: #c4c4c4; border-radius: 4px; background: #fff; color: #1a1a1a; }
.btn:disabled { background: var(--bg); border-color: #dedede; color: #bdbdbd; }
.btn.primary { border: 2px solid var(--blue); }

/* Scrollbars */
.hscroll { display: flex; align-items: center; gap: 5px; height: 19px; padding: 0 6px 0 4px; background: var(--bg); }
.hscroll .track { flex: 1; }
.thumb { display: block; border-radius: 4px; background: var(--thumb); }
.hscroll .thumb { height: 8px; }
.tri { flex: none; border: 4px solid transparent; }
.tri.left { border-left: 0; border-right: 6px solid var(--thumb); }
.tri.right { border-right: 0; border-left: 6px solid var(--thumb); }
.tri.up { border-top: 0; border-bottom: 6px solid var(--thumb); }
.tri.down { border-bottom: 0; border-top: 6px solid var(--thumb); }

/* Left panel */
.side { display: flex; flex-direction: column; padding-left: 5px; }
.side-head { display: flex; align-items: center; justify-content: space-between; height: 26px; margin-right: 6px; padding: 0 3px 2px 7px; border-top: 3px solid var(--blue); }
.side-head h2, .modules { font-family: Roboto, sans-serif; font-weight: 700; }
.tree-wrap { flex: 1 0 0; min-height: 200px; display: flex; overflow: hidden; }
.tree { width: 192px; margin-left: 6px; padding-top: 1px; overflow: hidden; background: var(--panel); font-size: 13px; line-height: 18px; white-space: nowrap; }
.tree li { display: flex; align-items: center; height: 18px; padding-left: 7px; }
.tree li::before { content: ""; flex: none; width: 6px; height: 6px; margin: 0 11px 0 0; border: solid #8c8c8c; border-width: 2px 2px 0 0; transform: rotate(45deg); }
.tree .leaf { padding-left: 12px; }
.tree .leaf::before {
  width: 9px; height: 18px; margin: 0 3px 0 0; border: 0; transform: none;
  background:
    repeating-linear-gradient(#777 0 1px, transparent 1px 2px) 0 0 / 1px 100% no-repeat,
    repeating-linear-gradient(90deg, #777 0 1px, transparent 1px 2px) 0 9px / 9px 1px no-repeat;
}
.vscroll { display: flex; flex-direction: column; align-items: center; gap: 5px; width: 16px; padding: 5px 0; }
.vscroll .track { flex: 1; }
.vscroll .thumb { width: 7px; height: 96%; }
.tree-h { width: 192px; height: 17px; margin-left: 6px; padding-right: 4px; }
.tree-h .thumb { width: 83%; height: 7px; }
.grip { width: 15px; height: 7px; margin: 1px auto 1px; background: radial-gradient(circle, #aaa 1px, transparent 1px) 0 0 / 4px 4px; }
.modules { margin: 0 11px 0 5px; color: #000; }
.modules a { display: flex; align-items: center; gap: 4px; height: 22px; margin: 1px 0 2px; padding-left: 5px; border-radius: 5px; white-space: nowrap; }
.modules .selected { background: var(--blue); color: #fff; }
.side-foot { display: flex; justify-content: flex-end; align-items: center; height: 33px; padding-right: 14px; }
.gear { width: 20px; height: 20px; }

/* Center */
.center { display: flex; flex-direction: column; min-width: 0; border-left: 1px solid var(--line); background: var(--panel); }
.upper { flex: 0 0 260px; overflow: hidden; }
.navigator { display: flex; align-items: center; height: 19px; color: #777; background: var(--panel); }
.navigator.ruled { height: 20px; border-bottom: 1px solid #dcdcdc; }
.navigator button { justify-content: center; flex: none; width: 24px; height: 18px; }
.navigator .wide { width: 26px; margin-right: 7px; }
.navigator .dark { color: #222; }
.navigator .pos { flex: none; width: 50px; text-align: center; color: #000; font-size: 13px; }
.navigator .hscroll { flex: 1; padding-left: 5px; }
.item-h .thumb { width: 70%; }
.hscroll.inv-h .thumb { width: 42%; margin-left: 48%; }

.showall { display: grid; grid-template-columns: 174px 6px 20px minmax(0, 1fr) 5px 56px; align-items: center; height: 30px; padding: 0 3px 0 2px; background: var(--bg); }
.showall .dash { justify-self: end; margin-right: 72px; }
.tabs.small { height: 24px; }
.tabs.small .tab { padding: 2px 6px 0; }
.lower { flex: 1; min-height: 300px; }
.sums { display: grid; grid-template-columns: 47px 212px 221px 176px 55px 34px 53px 43px 57px minmax(0, 1fr) 72px 72px 169px; align-items: center; height: 24px; border-top: 1px solid #dfdfdf; }
.cell { height: 21px; margin: 0 1px 0 0; padding: 2px 4px; border: 1px solid #e0e0e0; border-radius: 4px; font-size: 11px; }
.cell.num { text-align: right; }
.actions { display: grid; grid-template-columns: 70px 6px 100px 6px 85px 6px 81px 6px 96px 6px 36px 6px 36px 6px 36px 6px 31px 6px; align-items: center; height: 32px; padding: 0 0 2px 2px; border-top: 1px solid var(--line); background: var(--bg); }
.actions .sep, .dialog-actions .sep { justify-self: center; height: 25px; }
.split { display: flex; height: 25px; border: 1px solid #e0e0e0; border-bottom-color: #c4c4c4; border-radius: 4px; background: #fff; }
.split button { justify-content: center; flex: 1; }
.split button + button { flex: 0 0 22px; border-left: 1px solid #e0e0e0; }
.colors { width: 18px; height: 16px; }

/* Right panel */
.info { display: flex; flex-direction: column; min-width: 0; border: solid var(--line); border-width: 0 1px 0 2px; background: var(--panel); }
.info .tab { padding: 2px 5px 0; }
.info .tab.active { padding: 2px 7px 0; }
.info .cut { width: 34px; overflow: hidden; border-right: 0; }
.pager { display: flex; align-items: center; justify-content: space-between; flex: 1; background: var(--bg); padding: 0 2px 0 4px; }
.faint { color: #bbb; }
.info-body { flex: 1; }
.grid .empty { text-align: center; color: #000; border-bottom: 1px solid #dfdfdf; }
.info-sums { display: grid; grid-template-columns: 66px 63px 1fr; align-items: center; height: 22px; margin: 0 1px; }
.flags { display: grid; grid-template-columns: 33px 30px 33px 34px 32px 7px 4px 1fr; align-items: center; height: 25px; padding: 0 0 2px 3px; background: var(--bg); font-size: 13px; }

/* Status bar */
.statusbar { display: flex; justify-content: flex-end; height: 29px; padding: 1px 1px 1px 4px; background: var(--blue); color: #9a9a9a; }
.cellbar { display: flex; align-items: center; justify-content: center; padding: 0 3px; min-width: 28px; border: 1px solid #264e8b; }
.cellbar.trx { width: 104px; padding-left: 40px; color: #fff; }
.cellbar.white { color: #fff; }
.face { width: 19px; height: 19px; }

/* Dialog window */
.dialog {
  position: absolute;
  left: 421px;
  top: 166px;
  width: 1079px;
  height: 700px;
  display: flex;
  flex-direction: column;
  padding-top: 2px;
  border: 1px solid #b0b0b0;
  border-radius: 8px;
  background: var(--bg);
  box-shadow: 0 16px 36px rgba(0, 0, 0, .3), 0 2px 8px rgba(0, 0, 0, .1);
  overflow: hidden;
}
.dialog-body { flex: 1; display: grid; grid-template-columns: 895px minmax(0, 1fr); min-height: 0; }
.invoices { display: flex; flex-direction: column; min-width: 0; }
.dialog-head { display: grid; grid-template-columns: 211px 1fr 16px; align-items: center; height: 34px; padding: 0 9px 0 5px; background: var(--blue); color: #fff; }
.dialog-head h2 { padding-left: 176px; text-align: center; }
.search { display: flex; align-items: center; height: 22px; padding: 0 4px; border-radius: 4px; background: #fff; }
.search input { flex: 1; min-width: 0; padding: 0; border: 0; outline: 0; background: none; }
.search input::placeholder { color: #b8b8b8; }
.search .ic { width: 14px; height: 14px; }
.invoice-list { flex: 1; background: var(--panel); }
.preview { display: flex; flex-direction: column; min-width: 0; border-left: 2px solid var(--line); overflow: hidden; }
.preview .tabs { height: 24px; }
.preview .tab { padding: 0 6px; flex: none; border-top-color: transparent; }
.subtabs { display: flex; height: 26px; padding: 0 22px; color: var(--blue); }
.subtabs a { padding-top: 5px; border-bottom: 3px solid var(--blue); }
.pdfbar { display: flex; align-items: center; gap: 11px; flex: none; height: 32px; margin: 0 -20px 5px 12px; padding-left: 10px; border: 1px solid var(--line); border-radius: 8px; background: #fff; }
.pdfbar .tool { flex: none; }
.page { flex: 1; min-height: 0; margin-left: 5px; padding: 158px 0 0 40px; border: 1px solid #d6d6d6; border-width: 1px 0 0 1px; background: #fff; color: #43484f; font: 11px/12px "Liberation Sans", Arial, sans-serif; white-space: nowrap; overflow: hidden; }
.issued { padding-left: 57px; }
.buyer { padding: 21px 0 0 57px; font-size: 13px; line-height: 16px; font-style: normal; }
.seller-cap { margin-top: 115px; padding-bottom: 1px; border-bottom: 1px solid #43484f; font-weight: 700; }
.page h3 { margin-bottom: 2px; font-size: 16px; line-height: 19px; font-weight: 700; }
.seller { line-height: 12px; }
.band { margin-top: 9px; padding-left: 1px; background: #868d94; color: #fff; font-weight: 700; line-height: 15px; }
.item { margin-top: 2px; }
.code { margin-top: 2px; padding-bottom: 3px; border-bottom: 1px solid #d6d6d6; line-height: 14px; }
.page-h { padding-right: 0; border-bottom: 1px solid var(--line); }
.page-h .thumb { height: 7px; border-radius: 4px 0 0 4px; }
.dlg-h { flex: none; padding: 0 5px 0 5px; }
.dlg-h .thumb { width: 63%; height: 7px; }
.tabs.notes { flex: none; height: 31px; }
.tabs.notes .tab { padding: 3px 6px 0; }
.notes .close { align-self: flex-start; height: 24px; margin-left: auto; background: var(--bg); }
.dialog-actions { flex: none; display: grid; grid-template-columns: 80px 6px 127px 6px 96px 6px 88px 6px 61px 6px 61px 6px 102px 6px 82px 6px 76px 6px minmax(0, 1fr) 6px 87px 6px 96px; align-items: center; height: 30px; padding: 0 3px 1px 3px; }
.dialog-actions .check { padding-left: 2px; }

/* Highlight round the GLN Objekta column */
.marker { position: absolute; left: 349px; top: 34px; width: 103px; height: 66px; border: 3px solid #ed1c24; }

/* System overlay */
.watermark { position: absolute; right: 82px; bottom: 50px; width: 238px; color: rgba(120, 120, 120, .5); font: 14px/20px "Open Sans", sans-serif; white-space: nowrap; pointer-events: none; }
.wm-title { font-size: 19px; line-height: 26px; }
```
